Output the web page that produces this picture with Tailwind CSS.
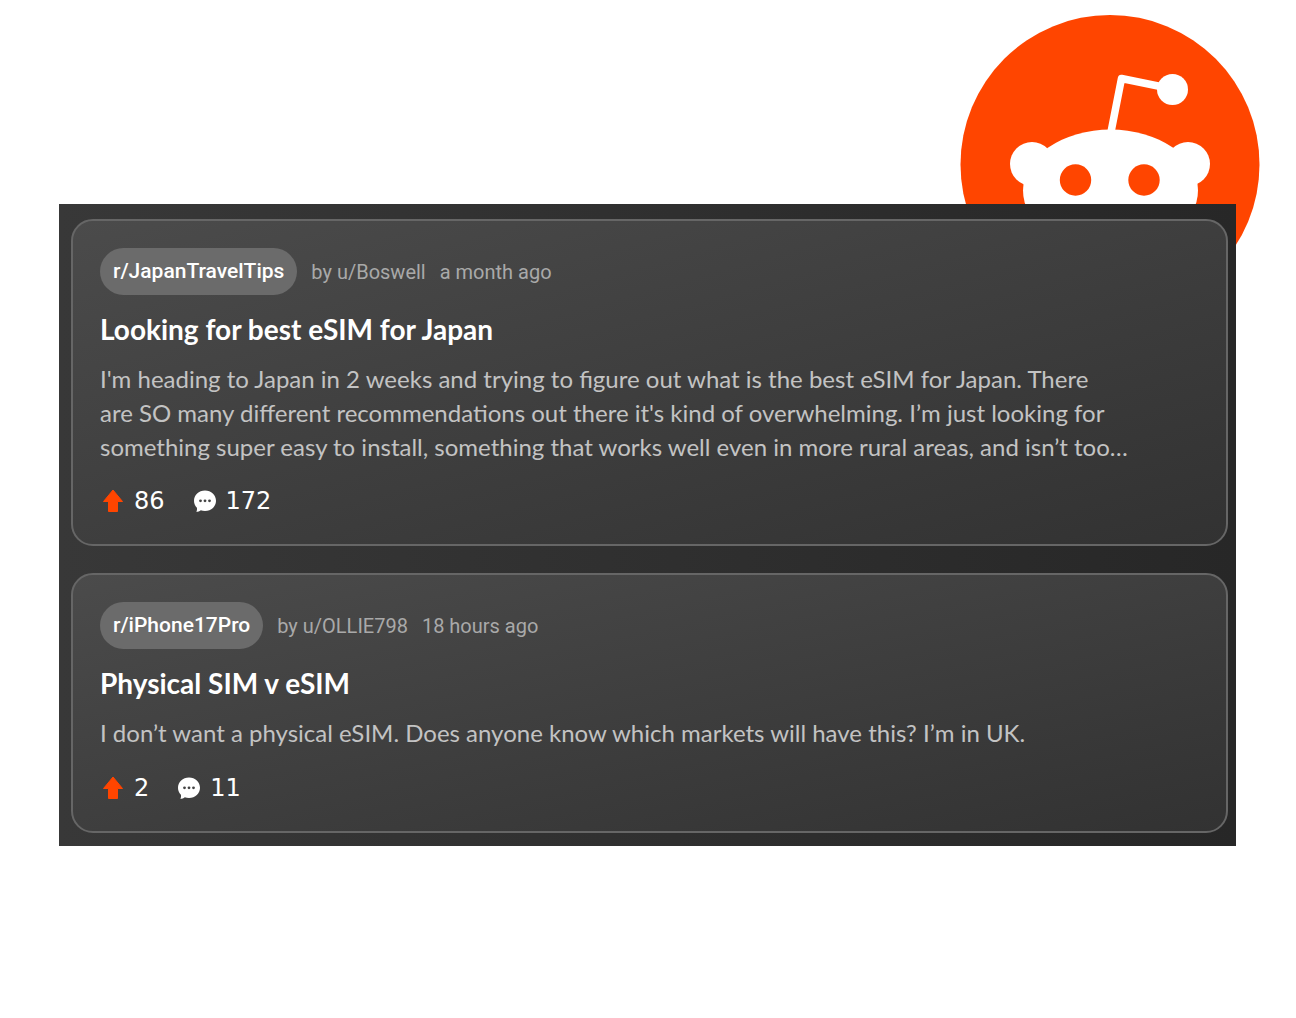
<!DOCTYPE html>
<html lang="en">
<head>
<meta charset="utf-8">
<title>Reddit threads</title>
<script src="https://cdn.jsdelivr.net/npm/@tailwindcss/browser@4"></script>
</head>
<body class="bg-white font-['Lato',sans-serif]">
<main class="relative min-h-screen pt-[204px] pr-[60px] pb-10 pl-[59px]">
  <!-- Reddit mark, peeking out from behind the thread list -->
  <svg class="absolute top-[14px] right-[36px] size-[300px]" viewBox="0 0 300 300" role="img" aria-label="Reddit">
    <circle cx="150" cy="150.500" r="149.500" fill="#ff4500"/>
    <g fill="#fff">
      <circle cx="72" cy="150" r="22"/>
      <circle cx="228" cy="150" r="22"/>
      <ellipse cx="150.500" cy="176.500" rx="87.500" ry="61"/>
      <circle cx="212.500" cy="75.500" r="15.500"/>
    </g>
    <path d="M151 118L161.500 64.500L203 73" fill="none" stroke="#fff" stroke-width="7.500" stroke-linejoin="round"/>
    <circle cx="115.500" cy="166" r="15.700" fill="#ff4500"/>
    <circle cx="184" cy="166" r="15.700" fill="#ff4500"/>
  </svg>

  <section class="relative flex flex-col gap-[27px] bg-linear-to-r from-[#383838] to-[#272727] pt-[15px] pr-2 pb-[13px] pl-3">
    <article class="rounded-[22px] border-2 border-[#666] bg-linear-to-br from-[#4b4b4b] to-[#323232] px-[27px] pt-[27px] pb-[25px]">
      <header class="flex items-center gap-[14px] font-['Roboto',sans-serif] text-xl text-[#a9a9a9]">
        <a href="#" class="rounded-full bg-[#6b6b6b] px-[13px] text-[21px] leading-[47px] font-medium text-white">r/JapanTravelTips</a>
        <span>by u/Boswell</span>
        <time>a month ago</time>
      </header>
      <h2 class="mt-4 text-[28px] leading-9 font-bold text-white">Looking for best eSIM for Japan</h2>
      <p class="mt-[15px] max-w-[1032px] text-2xl leading-[34px] text-[#c3c3c3]">I'm heading to Japan in 2 weeks and trying to figure out what is the best eSIM for Japan. There<br>are SO many different recommendations out there it's kind of overwhelming. I’m just looking for something super easy to install, something that works well even in more rural areas, and isn’t too…</p>
      <footer class="mt-[19px] flex items-center gap-[27px] font-['DejaVu_Sans',sans-serif] text-2xl leading-9 text-white">
        <span class="flex items-center gap-2">
          <svg class="size-[26px]" viewBox="0 0 26 26" aria-hidden="true"><path d="M13 2L22.500 13.500H17.500V23.500H8.500V13.500H3.500Z" fill="#ff4500" stroke="#ff4500" stroke-width="1" stroke-linejoin="round"/></svg>
          86
        </span>
        <span class="flex items-center gap-2">
          <svg class="size-[26px]" viewBox="0 0 26 26" aria-hidden="true"><path d="M13 2.500C19.200 2.500 24 7 24 12.800S19.200 23 13 23C11.400 23 10 22.700 8.800 22.300C7.500 23.300 6 23.800 4.300 23.800C5 22.600 5.200 21.200 4.900 19.700C3 17.900 2 15.500 2 12.800C2 7 6.800 2.500 13 2.500Z" fill="#fff"/><g fill="#444"><circle cx="8.500" cy="12.800" r="1.400"/><circle cx="13" cy="12.800" r="1.400"/><circle cx="17.500" cy="12.800" r="1.400"/></g></svg>
          172
        </span>
      </footer>
    </article>

    <article class="rounded-[22px] border-2 border-[#666] bg-linear-to-br from-[#4b4b4b] to-[#323232] px-[27px] pt-[27px] pb-[25px]">
      <header class="flex items-center gap-[14px] font-['Roboto',sans-serif] text-xl text-[#a9a9a9]">
        <a href="#" class="rounded-full bg-[#6b6b6b] px-[13px] text-[21px] leading-[47px] font-medium text-white">r/iPhone17Pro</a>
        <span>by u/OLLIE798</span>
        <time>18 hours ago</time>
      </header>
      <h2 class="mt-4 text-[28px] leading-9 font-bold text-white">Physical SIM v eSIM</h2>
      <p class="mt-[15px] max-w-[1032px] text-2xl leading-[34px] text-[#c3c3c3]">I don’t want a physical eSIM. Does anyone know which markets will have this? I’m in UK.</p>
      <footer class="mt-5 flex items-center gap-[27px] font-['DejaVu_Sans',sans-serif] text-2xl leading-9 text-white">
        <span class="flex items-center gap-2">
          <svg class="size-[26px]" viewBox="0 0 26 26" aria-hidden="true"><path d="M13 2L22.500 13.500H17.500V23.500H8.500V13.500H3.500Z" fill="#ff4500" stroke="#ff4500" stroke-width="1" stroke-linejoin="round"/></svg>
          2
        </span>
        <span class="flex items-center gap-2">
          <svg class="size-[26px]" viewBox="0 0 26 26" aria-hidden="true"><path d="M13 2.500C19.200 2.500 24 7 24 12.800S19.200 23 13 23C11.400 23 10 22.700 8.800 22.300C7.500 23.300 6 23.800 4.300 23.800C5 22.600 5.200 21.200 4.900 19.700C3 17.900 2 15.500 2 12.800C2 7 6.800 2.500 13 2.500Z" fill="#fff"/><g fill="#444"><circle cx="8.500" cy="12.800" r="1.400"/><circle cx="13" cy="12.800" r="1.400"/><circle cx="17.500" cy="12.800" r="1.400"/></g></svg>
          11
        </span>
      </footer>
    </article>
  </section>
</main>
</body>
</html>
